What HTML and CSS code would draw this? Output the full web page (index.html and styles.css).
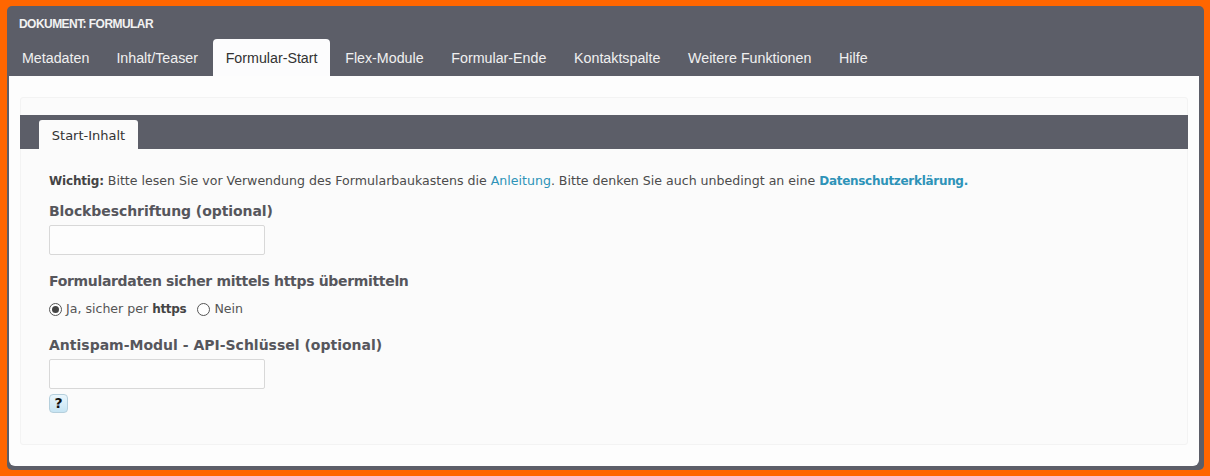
FILE: index.html
```html
<!DOCTYPE html>
<html lang="de">
<head>
<meta charset="utf-8">
<title>Dokument: Formular</title>
<link rel="stylesheet" href="styles.css">
</head>
<body>
<div class="panel">
  <div class="title">DOKUMENT: FORMULAR</div>
  <nav class="tabs">
    <a class="tab">Metadaten</a>
    <a class="tab">Inhalt/Teaser</a>
    <a class="tab active">Formular-Start</a>
    <a class="tab">Flex-Module</a>
    <a class="tab">Formular-Ende</a>
    <a class="tab">Kontaktspalte</a>
    <a class="tab">Weitere Funktionen</a>
    <a class="tab">Hilfe</a>
  </nav>
  <main class="content">
    <section class="box">
      <div class="subbar"><div class="subtab">Start-Inhalt</div></div>
      <div class="form">
        <p class="note"><strong>Wichtig:</strong> Bitte lesen Sie vor Verwendung des Formularbaukastens die <a class="link">Anleitung</a>. Bitte denken Sie auch unbedingt an eine <a class="link strong">Datenschutzerklärung.</a></p>
        <h3 class="label first">Blockbeschriftung (optional)</h3>
        <input class="field" type="text">
        <h3 class="label second">Formulardaten sicher mittels https übermitteln</h3>
        <div class="radios">
          <span class="radio checked"></span><span class="radio-text">Ja, sicher per <strong>https</strong></span>
          <span class="radio no"></span><span class="radio-text">Nein</span>
        </div>
        <h3 class="label third">Antispam-Modul - API-Schlüssel (optional)</h3>
        <input class="field" type="text">
        <div class="help">?</div>
      </div>
    </section>
  </main>
</div>
</body>
</html>
```
FILE: styles.css
```css
* { box-sizing: border-box; }
html, body { margin: 0; padding: 0; }
body {
  width: 1210px;
  height: 476px;
  background: #ff6600;
  padding: 6px 6px 6px 7px;
  font-family: "DejaVu Sans", Verdana, sans-serif;
  overflow: hidden;
}
.panel {
  height: 464px;
  background: #5c5e68;
  border-radius: 5px;
  padding: 0 5px 4px 2px;
  display: flex;
  flex-direction: column;
}
.title {
  font-family: "Liberation Sans", Arial, sans-serif;
  font-size: 12px;
  font-weight: bold;
  letter-spacing: -0.55px;
  color: #f2f2f2;
  padding: 11px 0 0 10px;
  height: 33px;
  line-height: 14px;
}
.tabs {
  display: flex;
  height: 37px;
  align-items: flex-end;
  margin-left: -1px;
}
.tab {
  font-family: "Liberation Sans", Arial, sans-serif;
  font-size: 14.25px;
  color: #f0f0f0;
  height: 37px;
  line-height: 39px;
  padding: 0 13.85px;
  border-radius: 4px 4px 0 0;
}
.tab:first-child { padding: 0 13.2px 0 14px; }
.tab.active {
  background: #fcfcfd;
  color: #333;
  padding: 0 12.85px;
  margin: 0 1px;
}
.content {
  flex: 1;
  background: #fdfdfd;
  border-radius: 0 0 6px 6px;
  padding: 21px 11px 20px 11px;
}
.box {
  height: 348px;
  background: #fbfbfb;
  border: 1px solid #f3f3f3;
  border-radius: 3px;
  padding-top: 17px;
}
.subbar {
  height: 34px;
  margin: 0 -1px;
  background: #5c5e68;
  padding: 5px 0 0 19px;
}
.subtab {
  width: 99px;
  height: 29px;
  line-height: 31px;
  background: #fbfbfb;
  color: #333;
  font-size: 13px;
  text-align: center;
  border-radius: 3px 3px 0 0;
}
.form {
  padding: 24px 0 0 28px;
  color: #444;
}
.note {
  margin: 0;
  font-size: 12.58px;
  line-height: 15px;
  color: #4c4c4c;
}
.note strong {
  color: #444;
  font-size: 12px;
  letter-spacing: -0.18px;
}
.link { color: #2e93b8; }
.link.strong {
  font-weight: bold;
  font-size: 12px;
  letter-spacing: -0.3px;
}
.label {
  margin: 0;
  font-size: 14px;
  font-weight: bold;
  line-height: 18px;
  color: #56565c;
}
.label.first { margin-top: 13px; letter-spacing: -0.07px; }
.label.second { margin-top: 17px; letter-spacing: -0.33px; }
.label.third { margin-top: 19px; }
.field {
  display: block;
  width: 216px;
  height: 30px;
  margin-top: 5px;
  background: #fdfdfd;
  border: 1px solid #d8d8d8;
  border-radius: 2px;
}
.radios {
  display: flex;
  align-items: center;
  height: 16px;
  margin-top: 11px;
  font-size: 12.58px;
  color: #555;
}
.radio-text { position: relative; top: -1px; }
.radios strong {
  color: #444;
  font-size: 12px;
  letter-spacing: -0.3px;
}
.radio {
  width: 13px;
  height: 13px;
  border: 1px solid #555;
  border-radius: 50%;
  background: #fff;
  margin-right: 4px;
  position: relative;
}
.radio.checked::after {
  content: "";
  position: absolute;
  left: 2px;
  top: 2px;
  width: 7px;
  height: 7px;
  border-radius: 50%;
  background: #444;
}
.radio.no { margin-left: 11px; }
.help {
  width: 19px;
  height: 19px;
  margin-top: 5px;
  border: 1px solid #b5cfdc;
  border-radius: 4px;
  background: linear-gradient(#eaf6fc, #c6e4f3);
  color: #111;
  font-size: 14px;
  font-weight: bold;
  line-height: 17px;
  text-align: center;
}
```
